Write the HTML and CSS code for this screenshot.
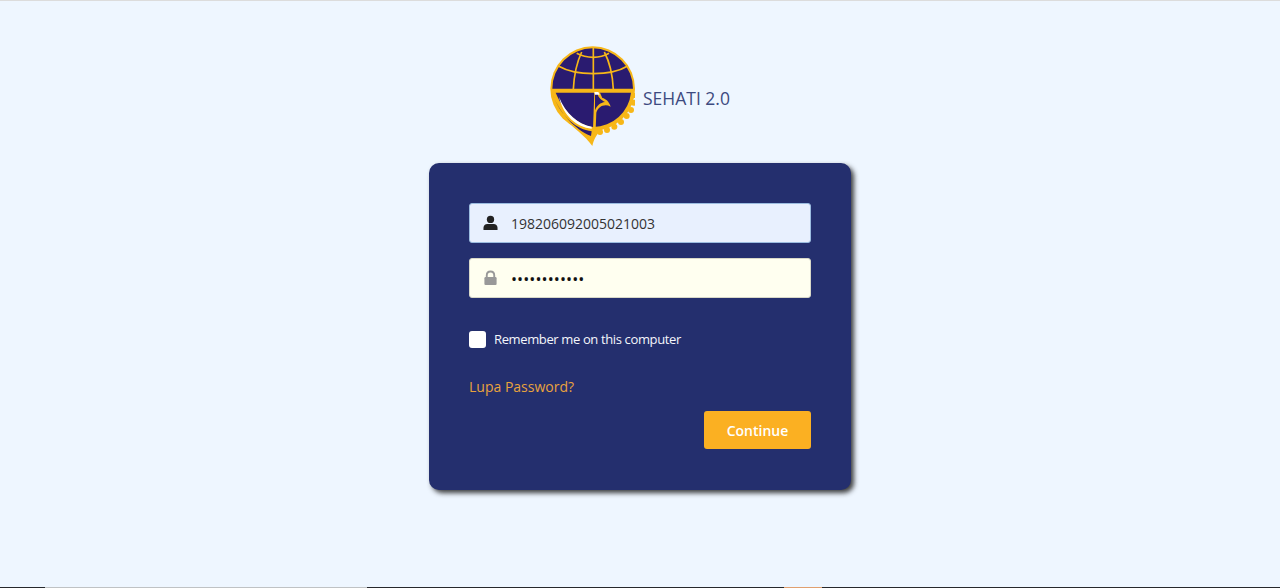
FILE: index.html
```html
<!DOCTYPE html>
<html lang="id">
<head>
<meta charset="utf-8">
<title>SEHATI 2.0</title>
<link rel="stylesheet" href="styles.css">
</head>
<body>
<main class="page">
  <header class="brand">
    <svg class="logo" viewBox="15 0 255 315" aria-hidden="true">
      <g fill="#f7b718">
        <circle cx="268" cy="160" r="8"/><circle cx="266" cy="182" r="9"/><circle cx="258" cy="204" r="9"/>
        <circle cx="245" cy="222" r="9"/><circle cx="228" cy="240" r="9"/><circle cx="208" cy="254" r="9"/>
        <circle cx="186" cy="264" r="9"/><circle cx="165" cy="270" r="9"/>
      </g>
      <circle cx="143" cy="140" r="127" fill="#f7b718"/>
      <path d="M55 225C85 260 120 280 142 312C146 295 152 280 170 262Z" fill="#f7b718"/>
      <path d="M22 140A121 121 0 0 1 264 140Z" fill="#2a1b70"/>
      <g fill="none" stroke="#f7b718" stroke-width="5">
        <path d="M145 18V142"/>
        <path d="M110 30C95 62 87 100 85 142"/>
        <path d="M178 30C195 62 203 100 205 142"/>
        <path d="M95 34C125 50 165 50 192 34"/>
        <path d="M40 72C75 92 110 95 145 95C180 95 215 92 248 72"/>
      </g>
      <path d="M20 146H268" fill="none" stroke="#f7b718" stroke-width="6"/>
      <path d="M32 152H258A115 115 0 0 1 145 255C105 252 58 215 32 152Z" fill="#2a1b70"/>
      <path d="M24 158C45 215 90 262 138 282L140 268C95 262 50 225 28 168Z" fill="#2a1b70"/>
      <path d="M42 165C62 215 100 248 140 254V260C95 256 55 222 42 165Z" fill="#fff"/>
      <path d="M148 150H164L172 168C182 170 192 178 197 194C180 184 160 192 154 212L152 262H144Z" fill="#f7b718"/>
      <path d="M150 155H158C160 168 168 172 180 180C166 182 156 190 150 205Z" fill="#2a1b70"/>
      <path d="M148 150H160L164 158H150Z" fill="#fff"/>
    </svg>
    <span class="brand-name">SEHATI 2.0</span>
  </header>

  <form class="card">
    <label class="field field-user">
      <svg class="field-icon" viewBox="0 0 16 16" aria-hidden="true"><circle cx="8" cy="4.2" r="3.9" fill="#222"/><path d="M0.5 15.5V13C0.5 10.5 2.5 9 4.5 9H11.5C13.5 9 15.5 10.5 15.5 13V15.5Z" fill="#222"/></svg>
      <input class="field-input" type="text" value="198206092005021003">
    </label>
    <label class="field field-pass">
      <svg class="field-icon" viewBox="0 0 16 16" aria-hidden="true"><path d="M4 7V5.2C4 2.8 5.7 1 8 1S12 2.8 12 5.2V7" fill="none" stroke="#999" stroke-width="2"/><rect x="1.5" y="7" width="13" height="8.5" rx="1.2" fill="#999"/></svg>
      <input class="field-input" type="password" value="abcdefghijkl">
    </label>
    <label class="remember">
      <input class="check" type="checkbox">
      <span>Remember me on this computer</span>
    </label>
    <a class="forgot" href="#">Lupa Password?</a>
    <div class="actions">
      <button class="continue" type="button">Continue</button>
    </div>
  </form>
</main>
<footer class="strip">
  <span class="seg seg-dark s1"></span>
  <span class="seg seg-light s2"></span>
  <span class="seg seg-dark s3"></span>
  <span class="seg seg-orange s4"></span>
  <span class="seg seg-dark s5"></span>
</footer>
</body>
</html>
```
FILE: styles.css
```css
* { box-sizing: border-box; }
html, body { height: 100%; margin: 0; }
body {
  display: flex;
  flex-direction: column;
  background: #eef6ff;
  border-top: 1px solid #dcdcdc;
  font-family: "Open Sans", "Noto Sans", sans-serif;
  overflow: hidden;
}
.page {
  flex: 1;
  display: flex;
  flex-direction: column;
  align-items: center;
  padding-top: 41px;
}
.brand {
  display: flex;
  align-items: center;
  gap: 8px;
  margin-bottom: 16px;
}
.logo { width: 85px; height: 105px; display: block; }
.brand-name {
  padding-top: 7px;
  width: 87px;
  font-size: 17.5px;
  line-height: 22px;
  color: #3d4a80;
  white-space: nowrap;
}
.card {
  width: 422px;
  height: 327px;
  padding: 40px 40px 0;
  background: #242f6e;
  border-radius: 10px;
  box-shadow: 3px 3px 5px rgba(30, 30, 30, .85);
  display: flex;
  flex-direction: column;
}
.field {
  display: flex;
  align-items: center;
  height: 40px;
  padding-left: 13px;
  border-radius: 3px;
  border: 1px solid #9bbce0;
}
.field-user { background: #e8f0fe; margin-bottom: 15px; }
.field-pass { background: #fffff0; border-color: #d8d8c8; }
.field-icon { width: 15px; height: 16px; flex: none; }
.field-input {
  flex: 1;
  min-width: 0;
  margin-left: 13px;
  padding: 0;
  border: 0;
  outline: 0;
  background: transparent;
  font-family: inherit;
  font-size: 14px;
  color: #333;
}
.field-pass .field-input { color: #111; font-size: 16px; letter-spacing: .1px; padding-top: 1px; }
.remember {
  display: flex;
  align-items: center;
  gap: 8px;
  margin-top: 32px;
  font-size: 13px;
  letter-spacing: -.37px;
  line-height: 18px;
  color: #f4f6fb;
}
.check {
  appearance: none;
  width: 17px;
  height: 17px;
  margin: 0;
  background: #fff;
  border-radius: 3px;
}
.forgot {
  align-self: flex-start;
  margin-top: 29px;
  font-size: 14px;
  line-height: 19px;
  color: #e8a33d;
  text-decoration: none;
}
.actions {
  display: flex;
  justify-content: flex-end;
  margin-top: 15px;
}
.continue {
  width: 107px;
  height: 38px;
  border: 0;
  border-radius: 3px;
  background: #fbb022;
  color: #fff;
  font-family: inherit;
  font-size: 14px;
  font-weight: 600;
}
.strip { display: flex; height: 1px; flex: none; }
.seg-dark { background: #26282c; }
.seg-light { background: #bfc2c4; }
.seg-orange { background: #e0a070; }
.s1 { width: 45px; }
.s2 { width: 322px; }
.s3 { width: 417px; }
.s4 { width: 38px; }
.s5 { flex: 1; }
```
